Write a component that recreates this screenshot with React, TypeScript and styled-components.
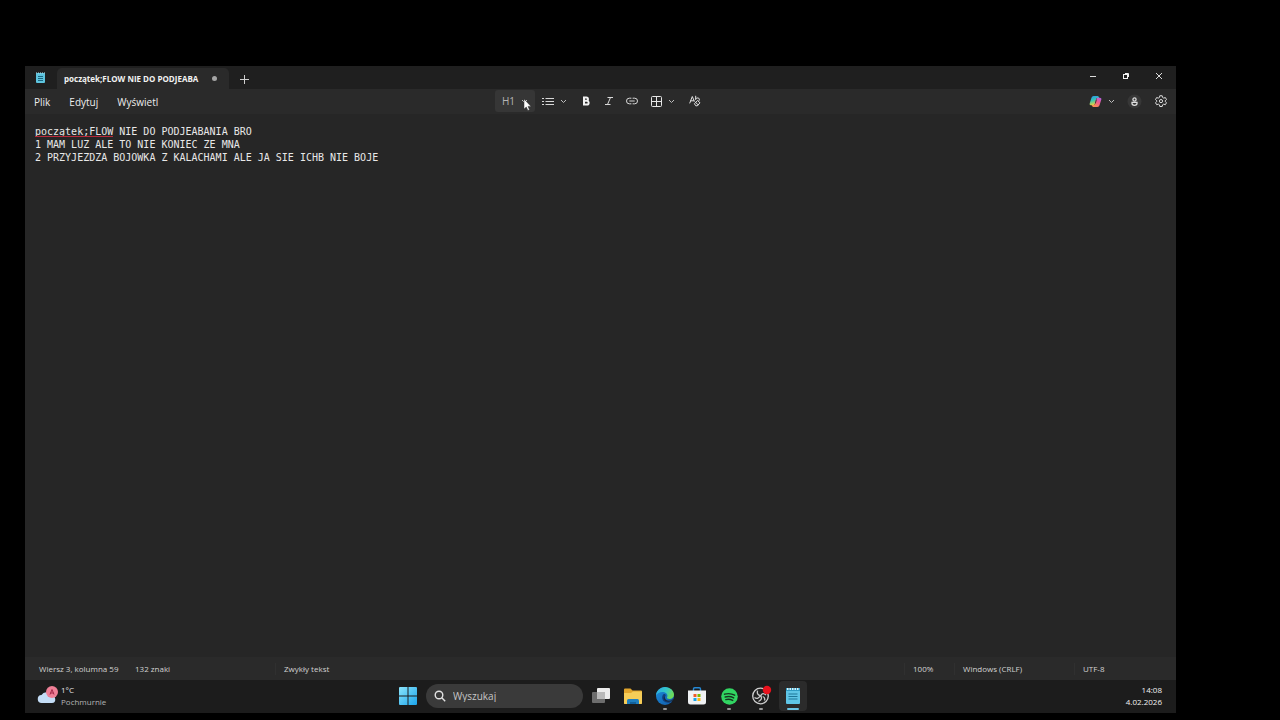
import React from "react";
import styled, { createGlobalStyle, css } from "styled-components";

const GlobalStyle = createGlobalStyle`
  * { box-sizing: border-box; }
  body { margin: 0; background: #000; color: #e6e6e6; font-family: "Open Sans", "Noto Sans", sans-serif; font-size: 10px; line-height: 12px; }
  button, input, textarea { font: inherit; color: inherit; border: 0; background: none; padding: 0; margin: 0; outline: none; }
  svg { display: block; flex: none; }
`;

const Screen = styled.div`
  min-height: 100vh;
  padding: 66px 104px 7px 25px;
  display: flex;
  flex-direction: column;
`;

const Window = styled.main`
  flex: 1;
  display: flex;
  flex-direction: column;
  background: #262626;
`;

const TitleBar = styled.header`
  height: 23px;
  display: flex;
  align-items: stretch;
  background: #1f1f1f;
`;

const AppIcon = styled.div`
  width: 31px;
  display: grid;
  place-items: center;
`;

const Tab = styled.button`
  width: 172px;
  margin: 2px 0 0 1px;
  padding: 0 12px 0 7px;
  display: flex;
  align-items: center;
  justify-content: space-between;
  border-radius: 5px 5px 0 0;
  background: #2a2a2a;
  color: #f2f2f2;
  font-size: 8px;
  font-weight: 700;
  white-space: nowrap;
`;

const UnsavedDot = styled.span`
  width: 5px;
  height: 5px;
  border-radius: 50%;
  background: #a5a5a5;
`;

const NewTab = styled.button`
  width: 31px;
  padding-top: 3px;
  display: grid;
  place-items: center;
`;

const WindowControls = styled.div`
  margin-left: auto;
  padding-right: 1px;
  display: flex;
`;

const WindowButton = styled.button`
  width: 33px;
  padding-bottom: 3px;
  display: grid;
  place-items: center;
`;

const MenuBar = styled.div`
  height: 25px;
  display: grid;
  grid-template-columns: 1fr auto 1fr;
  background: #2a2a2a;
`;

const Menus = styled.nav`
  display: flex;
  align-items: center;
  gap: 19px;
  padding-left: 9px;
`;

const MenuButton = styled.button`
  font-size: 10px;
  color: #ededed;
`;

const FormatTools = styled.div`
  display: flex;
  padding: 1px 0 2px;
`;

const Tool = styled.button<{ $width: number; $active?: boolean }>`
  position: relative;
  width: ${(p) => p.$width}px;
  display: flex;
  align-items: center;
  justify-content: center;
  gap: 6px;
  border-radius: 3px;
  font-size: 10px;
  ${(p) =>
    p.$active &&
    css`
      background: #363636;
      color: #b4b4b4;
    `}
`;

const Pointer = styled.svg`
  position: absolute;
  left: 28px;
  top: 8px;
`;

const SideTools = styled.div`
  display: flex;
  justify-content: flex-end;
  gap: 1px;
  padding: 1px 3px 2px 0;
`;

const EditorArea = styled.section`
  position: relative;
  flex: 1;
  display: flex;
`;

const Editor = styled.textarea`
  flex: 1;
  resize: none;
  padding: 11px 10px;
  color: #e8e8e8;
  font-family: "DejaVu Sans Mono", "Liberation Mono", monospace;
  font-size: 10px;
  line-height: 13px;
`;

const SpellingMark = styled.span`
  position: absolute;
  left: 10px;
  top: 22px;
  width: 78px;
  height: 1px;
  background: #b8283a;
`;

const StatusBar = styled.footer`
  height: 23px;
  display: flex;
  align-items: center;
  padding-left: 14px;
  background: #2a2a2a;
  color: #d2d2d2;
  font-size: 8px;
`;

const StatusCell = styled.span<{ $width: number; $divided?: boolean; $push?: boolean }>`
  width: ${(p) => p.$width}px;
  padding-left: ${(p) => (p.$divided ? 8 : 0)}px;
  margin-left: ${(p) => (p.$push ? "auto" : "0")};
  border-left: ${(p) => (p.$divided ? "1px solid #303030" : "0")};
  white-space: nowrap;
`;

const Taskbar = styled.footer`
  height: 33px;
  padding-bottom: 1px;
  display: grid;
  grid-template-columns: 1fr auto 1fr;
  background: #1c1c1c;
`;

const Weather = styled.button`
  display: flex;
  align-items: center;
  justify-self: start;
  gap: 3px;
  padding-left: 12px;
  text-align: left;
  font-size: 8px;
`;

const Condition = styled.span`
  display: block;
  color: #b4b4b4;
`;

const TaskItems = styled.div`
  display: flex;
  align-items: center;
  gap: 4px;
`;

const TaskButton = styled.button<{ $active?: boolean; $running?: boolean }>`
  position: relative;
  width: 28px;
  height: 30px;
  display: grid;
  place-items: center;
  border-radius: 4px;
  background: ${(p) => (p.$active ? "#2b2b2b" : "transparent")};
  ${(p) =>
    (p.$running || p.$active) &&
    css`
      &::after {
        content: "";
        position: absolute;
        bottom: 1px;
        left: 50%;
        width: ${p.$active ? 12 : 4}px;
        height: 2px;
        border-radius: 1px;
        transform: translateX(-50%);
        background: ${p.$active ? "#6cc5e5" : "#9a9a9a"};
      }
    `}
`;

const Search = styled.label`
  width: 157px;
  height: 24px;
  display: flex;
  align-items: center;
  gap: 7px;
  padding: 0 8px;
  border-radius: 12px;
  background: #3a3a3a;
`;

const SearchInput = styled.input`
  flex: 1;
  min-width: 0;
  font-size: 10px;
  &::placeholder { color: #c6c6c6; opacity: 1; }
`;

const Clock = styled.time`
  align-self: center;
  padding-right: 14px;
  text-align: right;
  font-size: 8px;
  color: #f2f2f2;
`;

const ClockLine = styled.span`
  display: block;
`;

const Chevron = () => (
  <svg width="7" height="5" viewBox="0 0 7 5" fill="none" stroke="#bdbdbd"><path d="M1 1l2.500 2.500L6 1" /></svg>
);

const NotepadSmall = () => (
  <svg width="9" height="12" viewBox="0 0 9 12">
    <rect y="1" width="9" height="10" rx="1" fill="#5ec4de" />
    <path d="M0 1h9" stroke="#b6e6f2" strokeDasharray="1 1" />
    <path d="M2 4.500h5M2 6.500h5M2 8.500h5" stroke="#1b6680" />
  </svg>
);

const CopilotIcon = () => (
  <svg width="13" height="13" viewBox="0 0 24 24">
    <defs>
      <linearGradient id="cpA" x1="0" y1="0" x2="0.3" y2="1"><stop stopColor="#2b8ff0" /><stop offset=".5" stopColor="#35c6b4" /><stop offset="1" stopColor="#e8d23e" /></linearGradient>
      <linearGradient id="cpB" x1="1" y1="0" x2="0.4" y2="1"><stop stopColor="#a861e8" /><stop offset=".5" stopColor="#ee5a91" /><stop offset="1" stopColor="#fb8d55" /></linearGradient>
    </defs>
    <path d="M16 2H8.500Q5.500 2 4.600 5L1.200 15.500Q.3 19 4 19h4q2 0 2.800-3L14 5.500h5Q18 2 16 2z" fill="url(#cpA)" />
    <path d="M8 22h7.500q3 0 3.900-3l3.400-10.500Q23.700 5 20 5h-4q-2 0-2.800 3L10 18.500H5Q6 22 8 22z" fill="url(#cpB)" />
    <path d="M13 8.500h1.500l-2 7H11z" fill="#2a2a2a" />
  </svg>
);

const GearIcon = () => (
  <svg width="12" height="12" viewBox="0 0 24 24" fill="none" stroke="#dedede" strokeWidth="2" strokeLinejoin="round">
    <path d="M9.600 1.500h4.800l.7 3.400 2.300 1.300 3.300-1.100 2.300 4.100-2.600 2.300v1.500l2.600 2.300-2.300 4.100-3.300-1.100-2.300 1.300-.7 3.400H9.600l-.7-3.400-2.300-1.300-3.300 1.100L1 15.300 3.600 13v-1.500L1 9.200l2.300-4.100 3.300 1.100 2.300-1.300z" />
    <circle cx="12" cy="12.200" r="3.200" />
  </svg>
);

const App = () => (
  <Screen>
    <GlobalStyle />
    <Window>
      <TitleBar>
        <AppIcon><NotepadSmall /></AppIcon>
        <Tab>początek;FLOW NIE DO PODJEABA<UnsavedDot /></Tab>
        <NewTab aria-label="Nowa karta">
          <svg width="9" height="9" viewBox="0 0 9 9" stroke="#cfcfcf"><path d="M4.500 0v9M0 4.500h9" /></svg>
        </NewTab>
        <WindowControls>
          <WindowButton aria-label="Minimalizuj">
            <svg width="8" height="8" viewBox="0 0 8 8" stroke="#dcdcdc"><path d="M1 4.500h6" /></svg>
          </WindowButton>
          <WindowButton aria-label="Przywróć">
            <svg width="8" height="8" viewBox="0 0 8 8" fill="none" stroke="#f2f2f2"><rect x="1.500" y="2.500" width="4" height="4" /><path d="M3 1.500h3.500V5" /></svg>
          </WindowButton>
          <WindowButton aria-label="Zamknij">
            <svg width="8" height="8" viewBox="0 0 8 8" stroke="#dcdcdc"><path d="M1 1l6 6M7 1L1 7" /></svg>
          </WindowButton>
        </WindowControls>
      </TitleBar>

      <MenuBar>
        <Menus>
          <MenuButton>Plik</MenuButton>
          <MenuButton>Edytuj</MenuButton>
          <MenuButton>Wyświetl</MenuButton>
        </Menus>
        <FormatTools>
          <Tool $width={40} $active>
            H1 <Chevron />
            <Pointer width="9" height="13" viewBox="0 0 9 13"><path d="M1 1v10l2.300-2 1.600 3.500 1.600-.8-1.500-3.300H8z" fill="#fff" stroke="#333" strokeWidth=".5" /></Pointer>
          </Tool>
          <Tool $width={39} aria-label="Lista">
            <svg width="12" height="9" viewBox="0 0 12 9" stroke="#d8d8d8"><path d="M0 1.500h2M0 4.500h2M0 7.500h2M3.500 1.500H12M3.500 4.500H12M3.500 7.500H12" /></svg>
            <Chevron />
          </Tool>
          <Tool $width={23} aria-label="Pogrubienie">
            <svg width="8" height="10" viewBox="0 0 8 10" fill="none" stroke="#f2f2f2" strokeWidth="2"><path d="M2 1.500h2.300a1.600 1.600 0 0 1 0 3.300H2zM2 4.800h2.800a1.800 1.800 0 0 1 0 3.700H2z" /></svg>
          </Tool>
          <Tool $width={23} aria-label="Kursywa">
            <svg width="10" height="10" viewBox="0 0 10 10" fill="none" stroke="#d8d8d8"><path d="M3.500 1.500H9M1 8.500h5.500M6.500 1.500l-3 7" /></svg>
          </Tool>
          <Tool $width={23} aria-label="Link">
            <svg width="12" height="8" viewBox="0 0 12 8" fill="none" stroke="#d8d8d8" strokeLinecap="round"><path d="M5 1.200H3.300a2.800 2.800 0 0 0 0 5.600H5M7 1.200h1.700a2.800 2.800 0 0 1 0 5.600H7M3.700 4h4.600" /></svg>
          </Tool>
          <Tool $width={40} aria-label="Tabela">
            <svg width="11" height="11" viewBox="0 0 11 11" fill="none" stroke="#e6e6e6"><rect x=".5" y=".5" width="10" height="10" rx="1" /><path d="M5.500 .5v10M.5 5.500h10" /></svg>
            <Chevron />
          </Tool>
          <Tool $width={23} aria-label="Wyczyść formatowanie">
            <svg width="12" height="12" viewBox="0 0 12 12" fill="none" stroke="#e2e2e2" strokeLinecap="round" strokeLinejoin="round"><path d="M.8 8L3.300 1.500 5.300 6.200M1.700 5.800h3M6.700 4.500V1.200M6.700 3.700q2.800-1.800 3.600.3.200.8-.2 1.500M5.700 8.500l2.800-3 2.500 2.300-2.700 3H7.200z" /><path d="M6.700 7.500l2.300 2.200" /></svg>
          </Tool>
        </FormatTools>
        <SideTools>
          <Tool $width={38} aria-label="Copilot"><CopilotIcon /><Chevron /></Tool>
          <Tool $width={25} aria-label="Konto">
            <svg width="15" height="15" viewBox="0 0 15 15"><circle cx="7.500" cy="7.500" r="7" fill="#373737" /><g fill="none" stroke="#dedede" strokeWidth="1.300"><circle cx="7.500" cy="5.500" r="1.600" /><path d="M5 8.300h5v1.200q0 1.800-2.500 1.800T5 9.500z" /></g></svg>
          </Tool>
          <Tool $width={25} aria-label="Ustawienia"><GearIcon /></Tool>
        </SideTools>
      </MenuBar>

      <EditorArea>
        <Editor
          aria-label="Edytor tekstu"
          spellCheck={false}
          defaultValue={"początek;FLOW NIE DO PODJEABANIA BRO\n1 MAM LUZ ALE TO NIE KONIEC ZE MNA\n2 PRZYJEZDZA BOJOWKA Z KALACHAMI ALE JA SIE ICHB NIE BOJE"}
        />
        <SpellingMark />
      </EditorArea>

      <StatusBar>
        <StatusCell $width={96}>Wiersz 3, kolumna 59</StatusCell>
        <StatusCell $width={140}>132 znaki</StatusCell>
        <StatusCell $width={120} $divided>Zwykły tekst</StatusCell>
        <StatusCell $width={50} $divided $push>100%</StatusCell>
        <StatusCell $width={120} $divided>Windows (CRLF)</StatusCell>
        <StatusCell $width={102} $divided>UTF-8</StatusCell>
      </StatusBar>
    </Window>

    <Taskbar>
      <Weather>
        <svg width="21" height="20" viewBox="0 0 21 20">
          <path d="M5 17a4 4 0 0 1-.5-8A5.500 5.500 0 0 1 14.500 10a3.500 3.500 0 0 1 .5 7z" fill="#c4ddf6" />
          <circle cx="15" cy="6" r="6" fill="#ef7f96" />
          <path d="M13 8.500l2-5 2 5M13.500 7h3" fill="none" stroke="#a32849" />
        </svg>
        <span>1°C<Condition>Pochmurnie</Condition></span>
      </Weather>
      <TaskItems>
        <TaskButton aria-label="Start">
          <svg width="18" height="18" viewBox="0 0 18 18">
            <defs><linearGradient id="win" x1="0" y1="0" x2="1" y2="1"><stop stopColor="#8be4fb" /><stop offset="1" stopColor="#1ba5ec" /></linearGradient></defs>
            <path d="M0 1q0-1 1-1h7.500v8.500H0zM9.500 0H17q1 0 1 1v7.500H9.500zM0 9.500h8.500V18H1q-1 0-1-1zM9.500 9.500H18V17q0 1-1 1H9.500z" fill="url(#win)" />
          </svg>
        </TaskButton>
        <Search>
          <svg width="12" height="12" viewBox="0 0 12 12" fill="none" stroke="#e2e2e2" strokeWidth="1.400"><circle cx="5" cy="5" r="3.800" /><path d="M7.800 7.800l3.400 3.400" /></svg>
          <SearchInput placeholder="Wyszukaj" aria-label="Wyszukaj" />
        </Search>
        <TaskButton aria-label="Widok zadań">
          <svg width="18" height="16" viewBox="0 0 18 16"><rect y="4" width="13" height="11" rx="1" fill="#6d6d6d" /><rect x="5" width="13" height="11" rx="1" fill="#ececec" /><path d="M5 4h8v7H6q-1 0-1-1z" fill="#b9b9b9" /></svg>
        </TaskButton>
        <TaskButton aria-label="Eksplorator plików">
          <svg width="18" height="17" viewBox="0 0 18 17"><path d="M0 1.500Q0 .5 1 .5h5.500l2 2H17q1 0 1 1V15q0 1-1 1H1q-1 0-1-1z" fill="#e2a52c" /><path d="M0 5h7l2-1.500h9V15q0 1-1 1H1q-1 0-1-1z" fill="#f6cd58" /><path d="M3 16v-3.500q0-1.500 1.500-1.500h9q1.500 0 1.500 1.500V16z" fill="#1f7fc0" /><path d="M6 16v-2h6v2z" fill="#12619c" /></svg>
        </TaskButton>
        <TaskButton aria-label="Edge" $running>
          <svg width="18" height="18" viewBox="0 0 18 18">
            <defs>
              <linearGradient id="edA" x1="0" y1="0" x2="1" y2=".4"><stop stopColor="#2ba7ed" /><stop offset=".6" stopColor="#35c8c4" /><stop offset="1" stopColor="#6ddb5b" /></linearGradient>
              <linearGradient id="edB" x1="0" y1="0" x2="1" y2="1"><stop stopColor="#1b8fdc" /><stop offset="1" stopColor="#1259a8" /></linearGradient>
            </defs>
            <circle cx="9" cy="9" r="9" fill="url(#edB)" />
            <path d="M0 8.500C.3 3.600 4.300 0 9 0c5 0 9 3.700 9 7.800 0 2.600-2 4.200-4.400 4.200-1.800 0-2.900-.7-2.600-1.400.7-1.500.6-3.200-.8-4.400C7.600 4 2 4.500 0 8.500z" fill="url(#edA)" />
            <path d="M7.500 7.200c-2.200 2-1.700 6.500 2 8.100 2.500 1 5 .3 6.900-1.100-2 .5-5 .3-6.500-1.400-1.300-1.500-1.100-2.800-.2-4.200 0-1-.8-1.800-2.200-1.400z" fill="#113f7e" />
            <path d="M9 8.500c-1 2.300.3 4.800 3.300 5 2 .2 3.500-.4 4.700-1.700l.5.300-1 2c-2.500 1-8.500 1-8.800-3.200z" fill="#1c1c1c" opacity=".6" />
          </svg>
        </TaskButton>
        <TaskButton aria-label="Microsoft Store">
          <svg width="18" height="18" viewBox="0 0 18 18"><path d="M5.500 4V2q0-1.300 1.300-1.300h4.400q1.300 0 1.300 1.300v2" fill="none" stroke="#2689d5" strokeWidth="1.400" /><path d="M0 3.500h18V15q0 2.500-2.500 2.500h-13Q0 17.500 0 15z" fill="#f0f2f4" /><path d="M5.500 7h3v3h-3z" fill="#f15a29" /><path d="M9.500 7h3v3h-3z" fill="#7fba00" /><path d="M5.500 11h3v3h-3z" fill="#18a3e8" /><path d="M9.500 11h3v3h-3z" fill="#fdb913" /></svg>
        </TaskButton>
        <TaskButton aria-label="Spotify" $running>
          <svg width="17" height="17" viewBox="0 0 17 17"><circle cx="8.500" cy="8.500" r="8.300" fill="#31d562" /><path d="M3.500 6.200q5.500-1.600 10.200 1M4.200 9q4.500-1.300 8.500.9M4.800 11.600q3.600-1 6.900.8" fill="none" stroke="#17351f" strokeWidth="1.400" strokeLinecap="round" /></svg>
        </TaskButton>
        <TaskButton aria-label="OBS Studio" $running>
          <svg width="22" height="22" viewBox="0 0 22 22">
            <circle cx="10.500" cy="11" r="7.800" fill="#202020" stroke="#cfcfcf" strokeWidth="1.300" />
            <g fill="none" stroke="#c8c8c8" strokeWidth="1.300"><path d="M10.700 10.700Q6.500 10 7.500 5.700" /><path d="M10.700 10.700Q12.500 7 16 10" /><path d="M10.700 10.700Q13 14.500 8.500 16.500M4.500 12.500q3 2.500 6.200-1.800M14.500 15.500q1-3-1.800-4" /></g>
            <circle cx="17" cy="5" r="4.200" fill="#e8121d" />
          </svg>
        </TaskButton>
        <TaskButton aria-label="Notatnik" $active>
          <svg width="14" height="18" viewBox="0 0 14 18"><rect y="1" width="14" height="16" rx="1" fill="#5fc5e6" /><path d="M0 1h14v3H0z" fill="#2f9cc4" /><path d="M1 2h12" stroke="#d9f3fb" strokeWidth="2" strokeDasharray="1.500 1" /><path d="M2.500 7h9M2.500 9.500h9M2.500 12h9" stroke="#1f7799" /></svg>
        </TaskButton>
      </TaskItems>
      <Clock dateTime="2026-02-04T14:08"><ClockLine>14:08</ClockLine><ClockLine>4.02.2026</ClockLine></Clock>
    </Taskbar>
  </Screen>
);

export default App;
